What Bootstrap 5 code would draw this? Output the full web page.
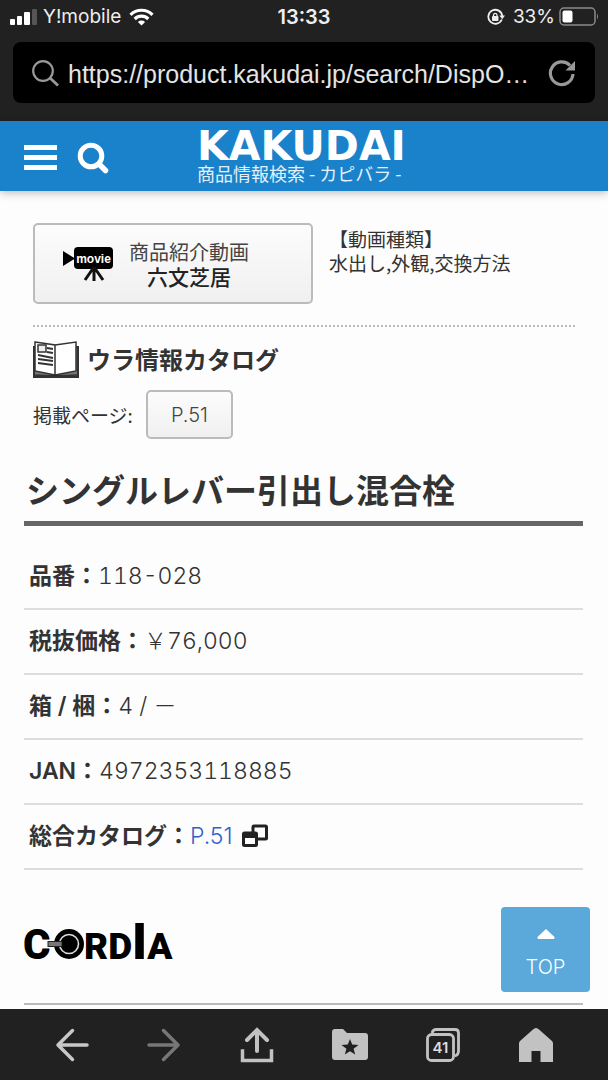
<!DOCTYPE html>
<html lang="ja">
<head>
<meta charset="utf-8">
<meta name="viewport" content="width=device-width, initial-scale=1">
<title>KAKUDAI 商品情報検索</title>
<link href="https://cdn.jsdelivr.net/npm/bootstrap@5.3.0/dist/css/bootstrap.min.css" rel="stylesheet">
<style>
  body { background: #fdfdfd; color: #333; font-family: "Noto Sans CJK JP", sans-serif; font-size: 19px; line-height: 24px; }
  svg { display: block; flex: none; }
  .chrome { background: #212121; color: #eee; }
  .status { height: 34px; padding: 0 9px; font: 400 19px/34px Inter, sans-serif; }
  .status > * { flex: 1 1 0; }
  .clock { font-weight: 600; font-size: 20px; }
  .chrome-top { padding-bottom: 18px; }
  .address { background: #000; border-radius: 8px; height: 61px; margin: 8px 13px 0; padding: 0 18px; }
  .address input { background: none; border: 0; outline: 0; color: #e4e4e4; min-width: 0; padding: 0; margin: 3px 0 0 9px; font: 400 25px/32px "Liberation Sans", sans-serif; }
  .plain { background: none; border: 0; padding: 0; }
  .site { background: #1a82cb; color: #fff; height: 70px; box-shadow: 0 2px 8px rgba(0,0,0,.25); padding: 4px 24px 0; }
  .brand { color: #fff; text-decoration: none; margin-left: 88px; }
  .brand-name { font: 700 41px/30px "DejaVu Sans", sans-serif; }
  .brand-sub { font-size: 18px; line-height: 24px; color: #e2f1fc; }
  .content { padding: 32px 25px 0 24px; }
  .soft { background: linear-gradient(#fcfcfc, #f0f0f0); border: 2px solid #bbb; border-radius: 5px; color: #444; }
  .movie-btn { width: 280px; height: 81px; padding: 0 28px; }
  .movie-btn .kind { font-size: 20px; }
  .movie-btn strong { font-size: 21px; font-weight: 500; color: #222; }
  .info { padding: 0 8px 20px 9px; }
  .dots { border-top: 2px dotted #bbb; margin: 21px 0 14px; }
  .info h2 { font-size: 24px; font-weight: 700; margin: 0; }
  .page-btn { width: 87px; height: 49px; margin-left: 13px; font: 300 20px/24px Inter, sans-serif; }
  .product { font-size: 33px; line-height: 48px; font-weight: 700; margin: 0; padding: 6px 2px 8px; border-bottom: 5px solid #666; }
  .specs { margin: 19px 0 0; }
  .specs > div { height: 65px; border-bottom: 2px solid #ddd; padding: 15px 0 0 5px; }
  .specs dt { font: 600 23px/32px Inter, "Noto Sans CJK JP", sans-serif; }
  .specs dd { margin: 0; font: 300 23px/32px Inter, "Noto Sans CJK JP", sans-serif; font-variant-numeric: tabular-nums; }
  .specs dd a { color: #2f62c9; text-decoration: none; font-variant-numeric: normal; }
  .maker { padding: 45px 0 38px; border-bottom: 2px solid #bbb; }
  .to-top { position: fixed; right: 18px; bottom: 88px; width: 89px; height: 85px; background: #5ba8da; color: #fff; border-radius: 4px; font: 300 20px/24px Inter, sans-serif; text-decoration: none; }
  .tools { position: sticky; bottom: 0; height: 71px; padding: 0 26px; color: #c2c2c2; }
</style>
</head>
<body class="d-flex flex-column min-vh-100">

<div class="chrome chrome-top">
  <div class="status d-flex align-items-center">
    <div class="d-flex align-items-center">
      <svg width="30" height="18" viewBox="0 0 30 18"><g fill="#fff"><rect x="1" y="11" width="5" height="6" rx="1"/><rect x="8" y="8" width="5" height="9" rx="1"/><rect x="15" y="4" width="6" height="13" rx="1"/></g><rect x="23" y="1" width="5" height="16" rx="1" fill="#555"/></svg>
      <span class="ms-1">Y!mobile</span>
      <svg class="ms-2" width="25" height="18" viewBox="0 0 25 18" fill="none" stroke="#fff" stroke-width="3.2"><path d="M1.5 6.8a15.6 15.6 0 0 1 22 0M5.7 11a9.7 9.7 0 0 1 13.6 0"/><path d="M12.500 17.500l-3.600-3.600a5.100 5.100 0 0 1 7.200 0z" fill="#fff" stroke="none"/></svg>
    </div>
    <div class="clock text-center">13:33</div>
    <div class="d-flex align-items-center justify-content-end">
      <svg width="18" height="18" viewBox="0 0 18 18"><path d="M14.8 11.500A7 7 0 1 1 15.300 8" fill="none" stroke="#eee" stroke-width="1.800"/><path d="M12.300 7.500h5.700l-2.800 3.800z" fill="#eee"/><rect x="5" y="8" width="6.500" height="5" rx="1" fill="#eee"/><path d="M6.500 8.500V6.800a1.800 1.800 0 0 1 3.500 0v1.700" fill="none" stroke="#eee" stroke-width="1.300"/></svg>
      <span class="mx-1 ps-1">33%</span>
      <svg width="40" height="20" viewBox="0 0 40 20"><rect x="1" y="1" width="35" height="17" rx="4" fill="none" stroke="#8a8a8a" stroke-width="1.500"/><rect x="3.500" y="3.500" width="10" height="12" rx="2" fill="#fff"/><path d="M38 6.500q2 3 0 6z" fill="#8a8a8a"/></svg>
    </div>
  </div>
  <div class="address d-flex align-items-center">
    <svg width="28" height="28" viewBox="0 0 28 28" fill="none" stroke="#999" stroke-width="2.200"><circle cx="12" cy="12" r="9.800"/><path d="M19 19l8 7.500" stroke-width="2.800"/></svg>
    <input class="flex-fill" type="text" aria-label="アドレス" value="https://product.kakudai.jp/search/DispO…">
    <button class="plain" type="button" aria-label="再読み込み"><svg width="30" height="28" viewBox="0 0 30 28" fill="none" stroke="#999"><path d="M26 15A11.300 11.300 0 1 1 23 6.500" stroke-width="3.200"/><path d="M28 2v9.500h-9.500l3.500-3.500z" fill="#999" stroke="none"/></svg></button>
  </div>
</div>

<header class="site d-flex align-items-center">
  <button class="plain" type="button" aria-label="メニュー"><svg width="33" height="26" viewBox="0 0 33 26" fill="#fff"><path d="M0 0h33v5H0zM0 10h33v5H0zM0 20h33v5H0z"/></svg></button>
  <button class="plain ms-3 ps-1" type="button" aria-label="検索"><svg width="32" height="32" viewBox="0 0 32 32" fill="none" stroke="#fff"><circle cx="14" cy="14" r="10.800" stroke-width="5"/><path d="M22 22l6.500 6.500" stroke-width="5.500" stroke-linecap="round"/></svg></button>
  <a class="brand d-flex flex-column" href="#">
    <span class="brand-name">KAKUDAI</span>
    <span class="brand-sub">商品情報検索 - カピバラ -</span>
  </a>
</header>

<main class="content flex-fill">
  <section class="info">
    <div class="d-flex align-items-start">
      <button class="soft movie-btn d-flex align-items-center" type="button">
        <svg width="50" height="36" viewBox="0 0 50 36"><path d="M0 5l12 7.500L0 20z"/><rect x="11" y="1" width="39" height="22" rx="4"/><path d="M31 21L22 34M31 21v14M31 21l9 13" stroke="#111" stroke-width="3"/><text x="30.500" y="17" fill="#fff" font-family="Liberation Sans" font-weight="700" font-size="12" text-anchor="middle">movie</text></svg>
        <span class="d-flex flex-column text-center ms-3"><span class="kind">商品紹介動画</span><strong>六文芝居</strong></span>
      </button>
      <div class="ms-3 pt-1">【動画種類】<br>水出し,外観,交換方法</div>
    </div>
    <div class="dots"></div>
    <div class="d-flex align-items-center">
      <svg width="46" height="37" viewBox="0 0 46 37" stroke="#333"><path d="M1 6h44v30H1z" fill="#777" stroke-width="2"/><path d="M2 1l20 3v30L2 30zM22 4l21-3v29L22 34z" fill="#fff" stroke-width="1.500"/><rect x="5" y="4" width="8" height="7" fill="#eee" stroke-width="1.500"/><path d="M14 7l6 1M14 11l6 1M5 14l15 3M5 18l15 2M5 22l15 2" fill="none" stroke-width="1.800"/><path d="M1 34l21 1 22-1" stroke-width="1.500"/></svg>
      <h2 class="ms-2">ウラ情報カタログ</h2>
    </div>
    <div class="d-flex align-items-center mt-2 pt-1">
      <span>掲載ページ:</span>
      <button class="soft page-btn" type="button">P.51</button>
    </div>
  </section>

  <h1 class="product">シングルレバー引出し混合栓</h1>
  <dl class="specs">
    <div class="d-flex align-items-baseline"><dt>品番：</dt><dd>118-028</dd></div>
    <div class="d-flex align-items-baseline"><dt>税抜価格：</dt><dd>￥76,000</dd></div>
    <div class="d-flex align-items-baseline"><dt>箱 / 梱：</dt><dd>4 / －</dd></div>
    <div class="d-flex align-items-baseline"><dt>JAN：</dt><dd>4972353118885</dd></div>
    <div class="d-flex align-items-baseline"><dt>総合カタログ：</dt><dd class="d-flex align-items-center"><a href="#">P.51</a><svg class="ms-2" width="28" height="24" viewBox="0 0 28 24"><rect x="12" y="2" width="13.500" height="13" rx="1" fill="#fff" stroke="#222" stroke-width="3"/><rect x="2.500" y="9" width="13" height="12.500" rx="1" fill="#fff" stroke="#222" stroke-width="3"/><path d="M2 9h14v5H2z" fill="#222"/></svg></dd></div>
  </dl>
  <div class="maker">
    <svg width="152" height="50" viewBox="0 0 152 50" role="img" aria-label="CORDIA" font-family="Roboto, sans-serif" font-weight="900" font-size="37" overflow="visible">
      <text x="-1" y="44" font-size="42">C</text>
      <circle cx="45" cy="29" r="15"/><circle cx="45" cy="29" r="9.500" fill="none" stroke="#ddd" stroke-width="1.600"/>
      <rect x="24" y="26.500" width="14" height="5" fill="#777" stroke="#222"/>
      <text x="60" y="44">RD<tspan font-size="50">I</tspan>A</text>
    </svg>
  </div>
</main>

<a class="to-top d-flex flex-column align-items-center justify-content-center" href="#">
  <svg class="mb-3 mt-2" width="18" height="10" viewBox="0 0 18 10" fill="#fff"><path d="M9 0l8.500 8q.5 2-1 2h-15q-1.500 0-1-2z"/></svg><span>TOP</span>
</a>

<nav class="tools chrome d-flex align-items-center">
  <button class="plain flex-fill d-flex justify-content-center" type="button" aria-label="戻る"><svg width="34" height="34" viewBox="0 0 34 34" fill="none" stroke="#c8c8c8" stroke-width="3.500" stroke-linecap="round" stroke-linejoin="round"><path d="M17.500 2.500L3 17l14.500 14.500M3 17h29"/></svg></button>
  <button class="plain flex-fill d-flex justify-content-center" type="button" aria-label="進む"><svg width="34" height="34" viewBox="0 0 34 34" fill="none" stroke="#777" stroke-width="3.500" stroke-linecap="round" stroke-linejoin="round"><path d="M16.500 2.500L31 17 16.500 31.500M31 17H2"/></svg></button>
  <button class="plain flex-fill d-flex justify-content-center" type="button" aria-label="共有"><svg width="34" height="36" viewBox="0 0 34 36" fill="none" stroke="#c2c2c2" stroke-width="4" stroke-linecap="round"><path d="M17 24V3M7 13L17 3l10 10"/><path d="M2.500 24v9.500h29V24" stroke-linecap="square" stroke-width="3.500"/></svg></button>
  <button class="plain flex-fill d-flex justify-content-center" type="button" aria-label="ブックマーク"><svg width="36" height="32" viewBox="0 0 36 32"><path d="M0 3q0-3 3-3h8l4 4h18q3 0 3 3v21q0 3-3 3H3q-3 0-3-3z" fill="#c2c2c2"/><path d="M18 10l2.200 5.600 6.300.3-4.900 3.800 1.600 5.800-5.200-3.300-5.200 3.300 1.600-5.800-4.900-3.800 6.300-.3z" fill="#212121"/></svg></button>
  <button class="plain flex-fill d-flex justify-content-center" type="button" aria-label="タブ"><svg width="34" height="34" viewBox="0 0 34 34" fill="none" stroke="#c2c2c2" stroke-width="2.800"><path d="M6 5q1-3.500 4-3.500h19q3.500 0 3.500 3.500v18q0 4-4 5"/><rect x="1.500" y="6.500" width="26" height="26" rx="4"/><text x="14.500" y="25" fill="#ddd" stroke="none" font-family="Inter" font-weight="600" font-size="15" text-anchor="middle">41</text></svg></button>
  <button class="plain flex-fill d-flex justify-content-center" type="button" aria-label="ホーム"><svg width="34" height="34" viewBox="0 0 34 34"><path d="M17 0q1.500 0 3 1.500L33 13q1 1 1 2.500V34H21.500V23h-9v11H0V15.500Q0 14 1 13L14 1.500Q15.500 0 17 0z" fill="#c2c2c2"/></svg></button>
</nav>

<script src="https://cdn.jsdelivr.net/npm/bootstrap@5.3.0/dist/js/bootstrap.bundle.min.js"></script>
</body>
</html>
